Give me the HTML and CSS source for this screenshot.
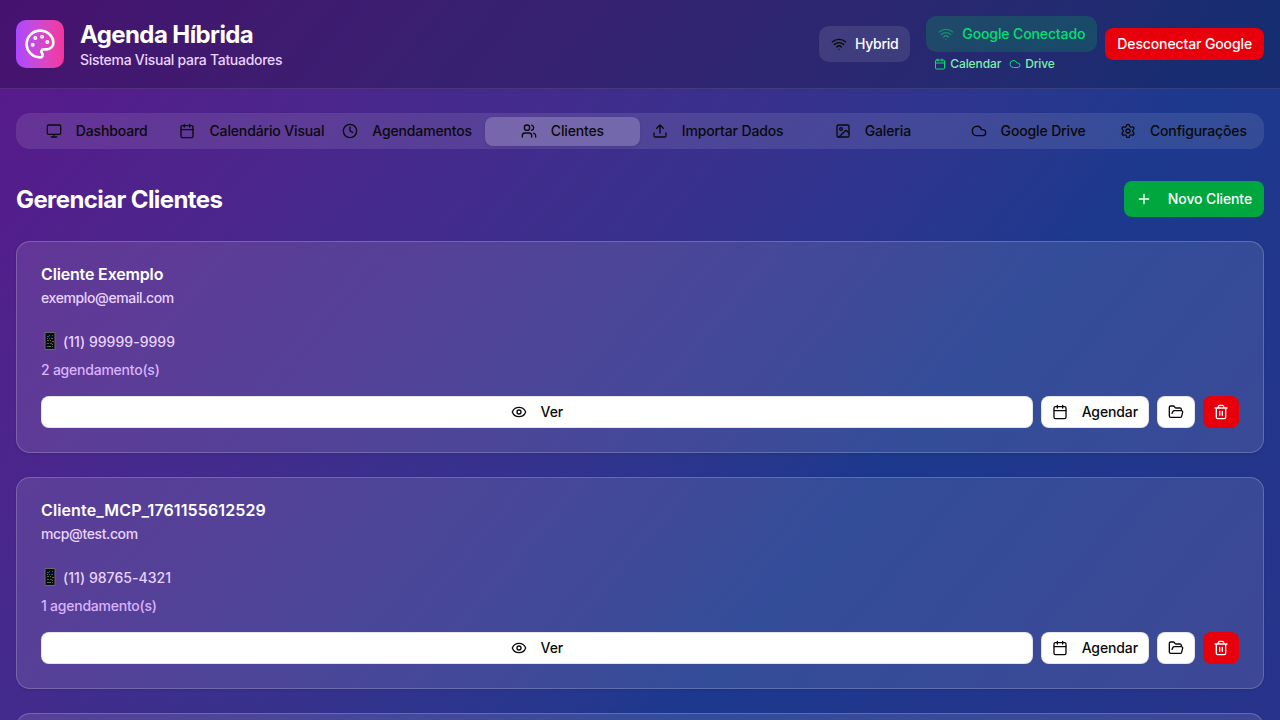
FILE: index.html
```html
<!DOCTYPE html>
<html lang="pt-BR">
<head>
<meta charset="utf-8">
<title>Agenda Híbrida</title>
<link rel="stylesheet" href="styles.css">
</head>
<body>
<svg class="sprite" aria-hidden="true">
  <symbol id="palette" viewBox="0 0 24 24"><path d="M12 22a1 1 0 0 1 0-20 10 9 0 0 1 10 9 5 5 0 0 1-5 5h-2.250a1.750 1.750 0 0 0-1.400 2.800l.3.400a1.750 1.750 0 0 1-1.400 2.800z"/><circle cx="13.500" cy="6.500" r=".5" fill="currentColor"/><circle cx="17.500" cy="10.500" r=".5" fill="currentColor"/><circle cx="6.500" cy="12.500" r=".5" fill="currentColor"/><circle cx="8.500" cy="7.500" r=".5" fill="currentColor"/></symbol>
  <symbol id="wifi" viewBox="0 0 24 24"><path d="M12 20h.01M2 8.820a15 15 0 0 1 20 0M5 12.859a10 10 0 0 1 14 0M8.500 16.429a5 5 0 0 1 7 0"/></symbol>
  <symbol id="calendar" viewBox="0 0 24 24"><path d="M8 2v4M16 2v4M3 10h18"/><rect width="18" height="18" x="3" y="4" rx="2"/></symbol>
  <symbol id="cloud" viewBox="0 0 24 24"><path d="M17.500 19H9a7 7 0 1 1 6.710-9h1.790a4.500 4.500 0 1 1 0 9Z"/></symbol>
  <symbol id="monitor" viewBox="0 0 24 24"><rect width="20" height="14" x="2" y="3" rx="2"/><path d="M8 21h8M12 17v4"/></symbol>
  <symbol id="clock" viewBox="0 0 24 24"><circle cx="12" cy="12" r="10"/><path d="M12 6v6l4 2"/></symbol>
  <symbol id="users" viewBox="0 0 24 24"><path d="M16 21v-2a4 4 0 0 0-4-4H6a4 4 0 0 0-4 4v2M16 3.128a4 4 0 0 1 0 7.744M22 21v-2a4 4 0 0 0-3-3.870"/><circle cx="9" cy="7" r="4"/></symbol>
  <symbol id="upload" viewBox="0 0 24 24"><path d="M12 3v12M17 8l-5-5-5 5M21 15v4a2 2 0 0 1-2 2H5a2 2 0 0 1-2-2v-4"/></symbol>
  <symbol id="image" viewBox="0 0 24 24"><rect width="18" height="18" x="3" y="3" rx="2"/><circle cx="9" cy="9" r="2"/><path d="m21 15-3.086-3.086a2 2 0 0 0-2.828 0L6 21"/></symbol>
  <symbol id="settings" viewBox="0 0 24 24"><path d="M9.671 4.136a2.340 2.340 0 0 1 4.659 0 2.340 2.340 0 0 0 3.319 1.915 2.340 2.340 0 0 1 2.330 4.033 2.340 2.340 0 0 0 0 3.831 2.340 2.340 0 0 1-2.330 4.033 2.340 2.340 0 0 0-3.319 1.915 2.340 2.340 0 0 1-4.659 0 2.340 2.340 0 0 0-3.320-1.915 2.340 2.340 0 0 1-2.330-4.033 2.340 2.340 0 0 0 0-3.831A2.340 2.340 0 0 1 6.350 6.051a2.340 2.340 0 0 0 3.319-1.915"/><circle cx="12" cy="12" r="3"/></symbol>
  <symbol id="plus" viewBox="0 0 24 24"><path d="M5 12h14M12 5v14"/></symbol>
  <symbol id="eye" viewBox="0 0 24 24"><path d="M2.062 12.348a1 1 0 0 1 0-.696 10.750 10.750 0 0 1 19.876 0 1 1 0 0 1 0 .696 10.750 10.750 0 0 1-19.876 0"/><circle cx="12" cy="12" r="3"/></symbol>
  <symbol id="folder" viewBox="0 0 24 24"><path d="m6 14 1.500-2.900A2 2 0 0 1 9.240 10H20a2 2 0 0 1 1.940 2.500l-1.540 6a2 2 0 0 1-1.950 1.500H4a2 2 0 0 1-2-2V5a2 2 0 0 1 2-2h3.900a2 2 0 0 1 1.690.9l.81 1.200a2 2 0 0 0 1.670.9H18a2 2 0 0 1 2 2v2"/></symbol>
  <symbol id="trash" viewBox="0 0 24 24"><path d="M3 6h18M19 6v14a2 2 0 0 1-2 2H7a2 2 0 0 1-2-2V6M8 6V4a2 2 0 0 1 2-2h4a2 2 0 0 1 2 2v2M10 11v6M14 11v6"/></symbol>
  <symbol id="phone" viewBox="0 0 12 18"><rect x=".5" width="11" height="18" rx="1" fill="#686c68" stroke="none"/><rect x="1.500" y="1" width="9" height="16" fill="#0a0c10" stroke="none"/><g stroke="none"><path fill="#2c5f94" d="M3 4h2v1H3zM7 6h2v1H7zM3 11h2v1H3zM8 14h1v1H8z"/><path fill="#2c7a50" d="M5 3h1v1H5zM3 8h2v1H3zM8 9h2v1H8zM3 14h2v1H3z"/><path fill="#7c3c50" d="M8 3h1v1H8zM5 6h1v1H5zM6 11h2v1H6z"/><path fill="#80682c" d="M3 6h1v1H3zM6 8h1v1H6zM8 12h1v1H8zM5 14h2v1H5z"/></g></symbol>
</svg>
<div class="page">
  <header class="header">
    <div class="brand">
      <div class="logo"><svg class="icon"><use href="#palette"/></svg></div>
      <div>
        <h1 class="brand-name">Agenda Híbrida</h1>
        <p class="brand-sub">Sistema Visual para Tatuadores</p>
      </div>
    </div>
    <div class="status">
      <div class="pill pill-mode"><svg class="icon"><use href="#wifi"/></svg><span>Hybrid</span></div>
      <div class="google">
        <div>
          <div class="pill pill-google"><svg class="icon"><use href="#wifi"/></svg><span>Google Conectado</span></div>
          <div class="services">
            <span class="service"><svg class="icon"><use href="#calendar"/></svg><span>Calendar</span></span>
            <span class="service"><svg class="icon"><use href="#cloud"/></svg><span>Drive</span></span>
          </div>
        </div>
        <button class="btn btn-red">Desconectar Google</button>
      </div>
    </div>
  </header>
  <main class="main">
    <nav class="tabs">
      <button class="tab"><svg class="icon"><use href="#monitor"/></svg><span>Dashboard</span></button>
      <button class="tab"><svg class="icon"><use href="#calendar"/></svg><span>Calendário Visual</span></button>
      <button class="tab"><svg class="icon"><use href="#clock"/></svg><span>Agendamentos</span></button>
      <button class="tab active"><svg class="icon"><use href="#users"/></svg><span>Clientes</span></button>
      <button class="tab"><svg class="icon"><use href="#upload"/></svg><span>Importar Dados</span></button>
      <button class="tab"><svg class="icon"><use href="#image"/></svg><span>Galeria</span></button>
      <button class="tab"><svg class="icon"><use href="#cloud"/></svg><span>Google Drive</span></button>
      <button class="tab"><svg class="icon"><use href="#settings"/></svg><span>Configurações</span></button>
    </nav>
    <div class="heading">
      <h2 class="heading-title">Gerenciar Clientes</h2>
      <button class="btn btn-green"><svg class="icon"><use href="#plus"/></svg><span>Novo Cliente</span></button>
    </div>
    <div class="cards">
      <article class="card">
        <h3 class="name">Cliente Exemplo</h3>
        <p class="email">exemplo@email.com</p>
        <p class="phone"><svg class="phone-icon"><use href="#phone"/></svg><span>(11) 99999-9999</span></p>
        <p class="count">2 agendamento(s)</p>
        <div class="actions">
          <button class="btn btn-white grow"><svg class="icon"><use href="#eye"/></svg><span>Ver</span></button>
          <button class="btn btn-white"><svg class="icon"><use href="#calendar"/></svg><span>Agendar</span></button>
          <button class="btn btn-white" aria-label="Pasta"><svg class="icon"><use href="#folder"/></svg></button>
          <button class="btn btn-red btn-trash" aria-label="Excluir"><svg class="icon"><use href="#trash"/></svg></button>
        </div>
      </article>
      <article class="card">
        <h3 class="name name-code">Cliente_MCP_1761155612529</h3>
        <p class="email">mcp@test.com</p>
        <p class="phone"><svg class="phone-icon"><use href="#phone"/></svg><span>(11) 98765-4321</span></p>
        <p class="count">1 agendamento(s)</p>
        <div class="actions">
          <button class="btn btn-white grow"><svg class="icon"><use href="#eye"/></svg><span>Ver</span></button>
          <button class="btn btn-white"><svg class="icon"><use href="#calendar"/></svg><span>Agendar</span></button>
          <button class="btn btn-white" aria-label="Pasta"><svg class="icon"><use href="#folder"/></svg></button>
          <button class="btn btn-red btn-trash" aria-label="Excluir"><svg class="icon"><use href="#trash"/></svg></button>
        </div>
      </article>
      <article class="card"></article>
    </div>
  </main>
</div>
</body>
</html>
```
FILE: styles.css
```css
* { box-sizing: border-box; margin: 0; padding: 0; }
body { font: 450 14px/20px Inter, "Liberation Sans", sans-serif; letter-spacing: -.12px; color: #0a0a0a; }
button { font: inherit; letter-spacing: inherit; color: inherit; border: 0; background: none; }
.sprite { display: none; }
.icon { width: 16px; height: 16px; flex: none; fill: none; stroke: currentColor; stroke-width: 2; stroke-linecap: round; stroke-linejoin: round; }
.page { height: 720px; overflow: hidden; background: linear-gradient(to bottom right in oklab, #59168b 0%, #1c398e 50%, #312c85 100%) 0 0 / 100% 1520px no-repeat; }

.header { display: flex; align-items: center; justify-content: space-between; height: 89px; padding: 0 16px; background: rgba(0, 0, 0, .2); border-bottom: 1px solid rgba(255, 255, 255, .1); }
.brand { display: flex; align-items: center; gap: 16px; }
.logo { display: grid; place-items: center; width: 48px; height: 48px; border-radius: 10px; color: #fff; background: linear-gradient(to right in oklab, #ad46ff, #f6339a); }
.logo .icon { width: 32px; height: 32px; }
.brand-name { padding-top: 1px; font-size: 24px; line-height: 31px; font-weight: 700; letter-spacing: -.6px; color: #fff; }
.brand-sub { letter-spacing: -.28px; color: #e9d4ff; }
.status { display: flex; align-items: center; gap: 16px; }
.pill { display: flex; align-items: center; gap: 8px; height: 36px; padding: 0 12px; border-radius: 10px; background: rgba(255, 255, 255, .1); color: #fff; font-weight: 500; }
.pill .icon { color: #0a0a0a; }
.pill-mode { letter-spacing: -.3px; }
.google { display: flex; align-items: center; gap: 8px; }
.pill-google { background: rgba(0, 201, 80, .2); color: #05df72; }
.pill-google .icon { color: #05df72; opacity: .5; }
.services { display: flex; gap: 8px; margin-top: 4px; padding: 0 8px; font-size: 12px; line-height: 16px; letter-spacing: -.12px; color: #7bf1a8; }
.service { display: flex; align-items: center; gap: 4px; }
.service .icon { width: 12px; height: 12px; color: #05df72; }

.btn { display: flex; align-items: center; justify-content: center; height: 32px; border-radius: 8px; font-weight: 500; white-space: nowrap; }
.btn-red { padding: 0 12px; color: #fff; background: #e7000b; }
.btn-green { gap: 16px; height: 36px; padding: 0 12px; color: #fff; background: #00a63e; }
.btn-white { gap: 14px; padding: 0 10px; background: #fff; border: 1px solid rgba(0, 0, 0, .1); }
.btn-trash { padding: 0 10px; }
.grow { flex: 1; }

.main { padding: 24px 16px; }
.tabs { display: grid; grid-template-columns: repeat(8, minmax(0, 1fr)); align-items: center; height: 36px; padding: 3px; border-radius: 14px; background: rgba(255, 255, 255, .1); }
.tab { display: flex; align-items: center; justify-content: center; gap: 14px; height: 29px; border-radius: 8px; font-weight: 500; white-space: nowrap; letter-spacing: -.14px; }
.tab.active { background: rgba(255, 255, 255, .2); box-shadow: 0 1px 3px rgba(0, 0, 0, .1); }
.heading { display: flex; align-items: center; justify-content: space-between; margin: 32px 0 24px; }
.heading-title { padding-top: 2px; font-size: 24px; line-height: 32px; font-weight: 700; letter-spacing: -.6px; color: #fff; }
.cards { display: grid; gap: 24px; }
.card { min-height: 212px; padding: 24px; border: 1px solid rgba(255, 255, 255, .2); border-radius: 14px; background: rgba(255, 255, 255, .1); box-shadow: 0 1px 3px rgba(0, 0, 0, .1); }
.name { font-size: 16px; line-height: 16px; font-weight: 600; letter-spacing: -.16px; color: #fff; }
.name-code { letter-spacing: .12px; }
.email { margin-top: 6px; letter-spacing: -.38px; color: #e9d4ff; }
.phone { display: flex; align-items: center; gap: 7px; margin: 24px 0 8px; padding-left: 3px; letter-spacing: .03px; color: #e9d4ff; }
.phone-icon { width: 12px; height: 18px; margin-top: -2px; }
.count { letter-spacing: -.23px; color: #dab2ff; }
.actions { display: flex; gap: 8px; margin-top: 16px; }
```
